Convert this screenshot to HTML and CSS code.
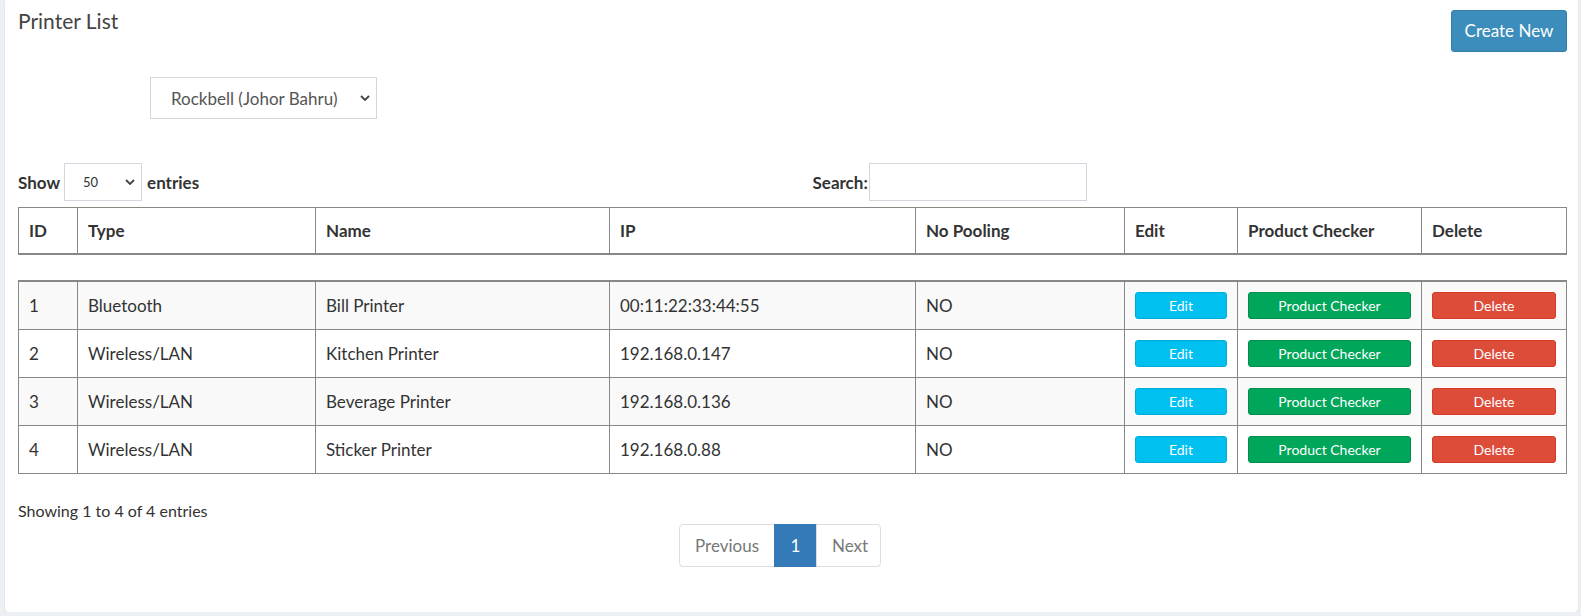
FILE: index.html
```html
<!DOCTYPE html>
<html lang="en">
<head>
    <meta charset="UTF-8">
    <title>Printer List</title>
    <link rel="stylesheet" href="styles.css">
</head>
<body>
    <div class="box">
        <div class="box-header">
            <h3 class="box-title">Printer List</h3>
            <button type="button" class="btn btn-primary">Create New</button>
        </div>

        <div class="outlet-select">
            <span>Rockbell (Johor Bahru)</span>
            <svg class="chevron" width="10" height="6" viewBox="0 0 10 6"><polyline points="1,1 5,5 9,1" fill="none" stroke="#444" stroke-width="1.8"/></svg>
        </div>

        <div class="dt-top">
            <div class="dt-length">
                <span>Show</span>
                <div class="length-select">
                    <span>50</span>
                    <svg class="chevron" width="10" height="6" viewBox="0 0 10 6"><polyline points="1,1 5,5 9,1" fill="none" stroke="#444" stroke-width="1.8"/></svg>
                </div>
                <span>entries</span>
            </div>
            <div class="dt-filter">
                <label>Search:</label>
                <input type="text" class="search-input">
            </div>
        </div>

        <table class="table table-head">
            <colgroup>
                <col class="c-id"><col class="c-type"><col class="c-name"><col class="c-ip">
                <col class="c-pool"><col class="c-edit"><col class="c-check"><col class="c-del">
            </colgroup>
            <thead>
                <tr>
                    <th>ID</th>
                    <th>Type</th>
                    <th>Name</th>
                    <th>IP</th>
                    <th>No Pooling</th>
                    <th>Edit</th>
                    <th>Product Checker</th>
                    <th>Delete</th>
                </tr>
            </thead>
        </table>

        <table class="table table-body">
            <colgroup>
                <col class="c-id"><col class="c-type"><col class="c-name"><col class="c-ip">
                <col class="c-pool"><col class="c-edit"><col class="c-check"><col class="c-del">
            </colgroup>
            <tbody>
                <tr>
                    <td>1</td>
                    <td>Bluetooth</td>
                    <td>Bill Printer</td>
                    <td>00:11:22:33:44:55</td>
                    <td>NO</td>
                    <td><button class="btn-xs btn-info">Edit</button></td>
                    <td><button class="btn-xs btn-success">Product Checker</button></td>
                    <td><button class="btn-xs btn-danger">Delete</button></td>
                </tr>
                <tr>
                    <td>2</td>
                    <td>Wireless/LAN</td>
                    <td>Kitchen Printer</td>
                    <td>192.168.0.147</td>
                    <td>NO</td>
                    <td><button class="btn-xs btn-info">Edit</button></td>
                    <td><button class="btn-xs btn-success">Product Checker</button></td>
                    <td><button class="btn-xs btn-danger">Delete</button></td>
                </tr>
                <tr>
                    <td>3</td>
                    <td>Wireless/LAN</td>
                    <td>Beverage Printer</td>
                    <td>192.168.0.136</td>
                    <td>NO</td>
                    <td><button class="btn-xs btn-info">Edit</button></td>
                    <td><button class="btn-xs btn-success">Product Checker</button></td>
                    <td><button class="btn-xs btn-danger">Delete</button></td>
                </tr>
                <tr>
                    <td>4</td>
                    <td>Wireless/LAN</td>
                    <td>Sticker Printer</td>
                    <td>192.168.0.88</td>
                    <td>NO</td>
                    <td><button class="btn-xs btn-info">Edit</button></td>
                    <td><button class="btn-xs btn-success">Product Checker</button></td>
                    <td><button class="btn-xs btn-danger">Delete</button></td>
                </tr>
            </tbody>
        </table>

        <div class="dt-info">Showing 1 to 4 of 4 entries</div>
        <div class="dt-paginate">
            <ul class="pagination">
                <li class="disabled"><a>Previous</a></li>
                <li class="active"><a>1</a></li>
                <li class="disabled"><a>Next</a></li>
            </ul>
        </div>
    </div>
</body>
</html>
```

FILE: styles.css
```css
body {
    font-family: 'Lato', 'Liberation Sans', sans-serif;
    font-size: 17px;
    color: #333;
    margin: 0;
    padding: 0;
    background-color: #ecf0f5;
}
.box {
    background: #fff;
    margin-left: 5px;
    width: 1573px;
    box-sizing: border-box;
    padding: 10px 11px 45px 13px;
    border-radius: 0 0 4px 4px;
    box-shadow: 0 1px 2px rgba(0, 0, 0, 0.12);
}
.box-header {
    display: flex;
    justify-content: space-between;
    align-items: flex-start;
}
.box-title {
    margin: 0;
    font-size: 21px;
    font-weight: normal;
    line-height: 22px;
    color: #444;
}
.btn {
    font-family: inherit;
    font-size: 17px;
    line-height: 24px;
    padding: 8px 0;
    border-radius: 3px;
    white-space: nowrap;
    box-sizing: border-box;
    cursor: pointer;
}
.btn-primary {
    background-color: #3c8dbc;
    border: 1px solid #367fa9;
    color: #fff;
    width: 116px;
}
.outlet-select {
    margin: 25px 0 0 132px;
    width: 227px;
    height: 42px;
    box-sizing: border-box;
    border: 1px solid #d2d6de;
    display: flex;
    align-items: center;
    justify-content: space-between;
    padding: 0 6px 0 20px;
    color: #555;
}
.chevron {
    display: block;
}
.dt-top {
    margin-top: 44px;
    display: grid;
    grid-template-columns: 1fr 1fr;
    height: 38px;
}
.dt-length {
    display: flex;
    align-items: center;
    font-weight: bold;
}
.length-select {
    margin: 0 5px 0 4px;
    width: 78px;
    height: 38px;
    box-sizing: border-box;
    border: 1px solid #d2d6de;
    display: flex;
    align-items: center;
    justify-content: space-between;
    padding: 0 6px 0 18px;
    font-weight: normal;
    font-size: 13px;
}
.dt-filter {
    display: flex;
    align-items: center;
    padding-left: 20px;
    font-weight: bold;
}
.search-input {
    margin-left: 1px;
    width: 218px;
    height: 38px;
    box-sizing: border-box;
    border: 1px solid #d2d6de;
    padding: 6px 12px;
}
.table {
    width: 100%;
    border-collapse: collapse;
    table-layout: fixed;
    border: 1px solid #888;
}
.c-id { width: 59px; }
.c-type { width: 238px; }
.c-name { width: 294px; }
.c-ip { width: 306px; }
.c-pool { width: 209px; }
.c-edit { width: 113px; }
.c-check { width: 184px; }
.c-del { width: 145px; }
.table-head {
    margin-top: 6px;
}
.table th {
    text-align: left;
    font-weight: bold;
    padding: 12px 10px;
    line-height: 21px;
    border: 1px solid #888;
    border-bottom: 2px solid #888;
    white-space: nowrap;
}
.table-body {
    margin-top: 25px;
    border-top: 2px solid #888;
}
.table td {
    padding: 10px;
    line-height: 22px;
    border: 1px solid #888;
    white-space: nowrap;
}
.table-body tr:nth-child(odd) {
    background-color: #f9f9f9;
}
.btn-xs {
    display: block;
    width: 100%;
    height: 27px;
    font-family: inherit;
    font-size: 14px;
    color: #fff;
    border-radius: 3px;
    padding: 0 5px;
    cursor: pointer;
}
.btn-info {
    background-color: #00c0ef;
    border: 1px solid #00acd6;
}
.btn-success {
    background-color: #00a65a;
    border: 1px solid #008d4c;
}
.btn-danger {
    background-color: #dd4b39;
    border: 1px solid #d73925;
}
.dt-info {
    margin-top: 26px;
    line-height: 22px;
    font-size: 16px;
}
.dt-paginate {
    margin-top: 2px;
    display: flex;
    justify-content: center;
    padding-right: 25px;
    font-size: 17px;
}
.pagination {
    display: flex;
    list-style: none;
    margin: 0;
    padding: 0;
}
.pagination li a {
    display: block;
    padding: 10px 15px;
    line-height: 21px;
    border: 1px solid #ddd;
    margin-left: -1px;
    color: #777;
    background: #fff;
}
.pagination li:first-child a {
    margin-left: 0;
    border-radius: 4px 0 0 4px;
    width: 64px;
    text-align: center;
}
.pagination li:last-child a {
    border-radius: 0 4px 4px 0;
    width: 33px;
    text-align: center;
}
.pagination li.active a {
    background-color: #337ab7;
    border-color: #337ab7;
    color: #fff;
    width: 11px;
    text-align: center;
}
```
